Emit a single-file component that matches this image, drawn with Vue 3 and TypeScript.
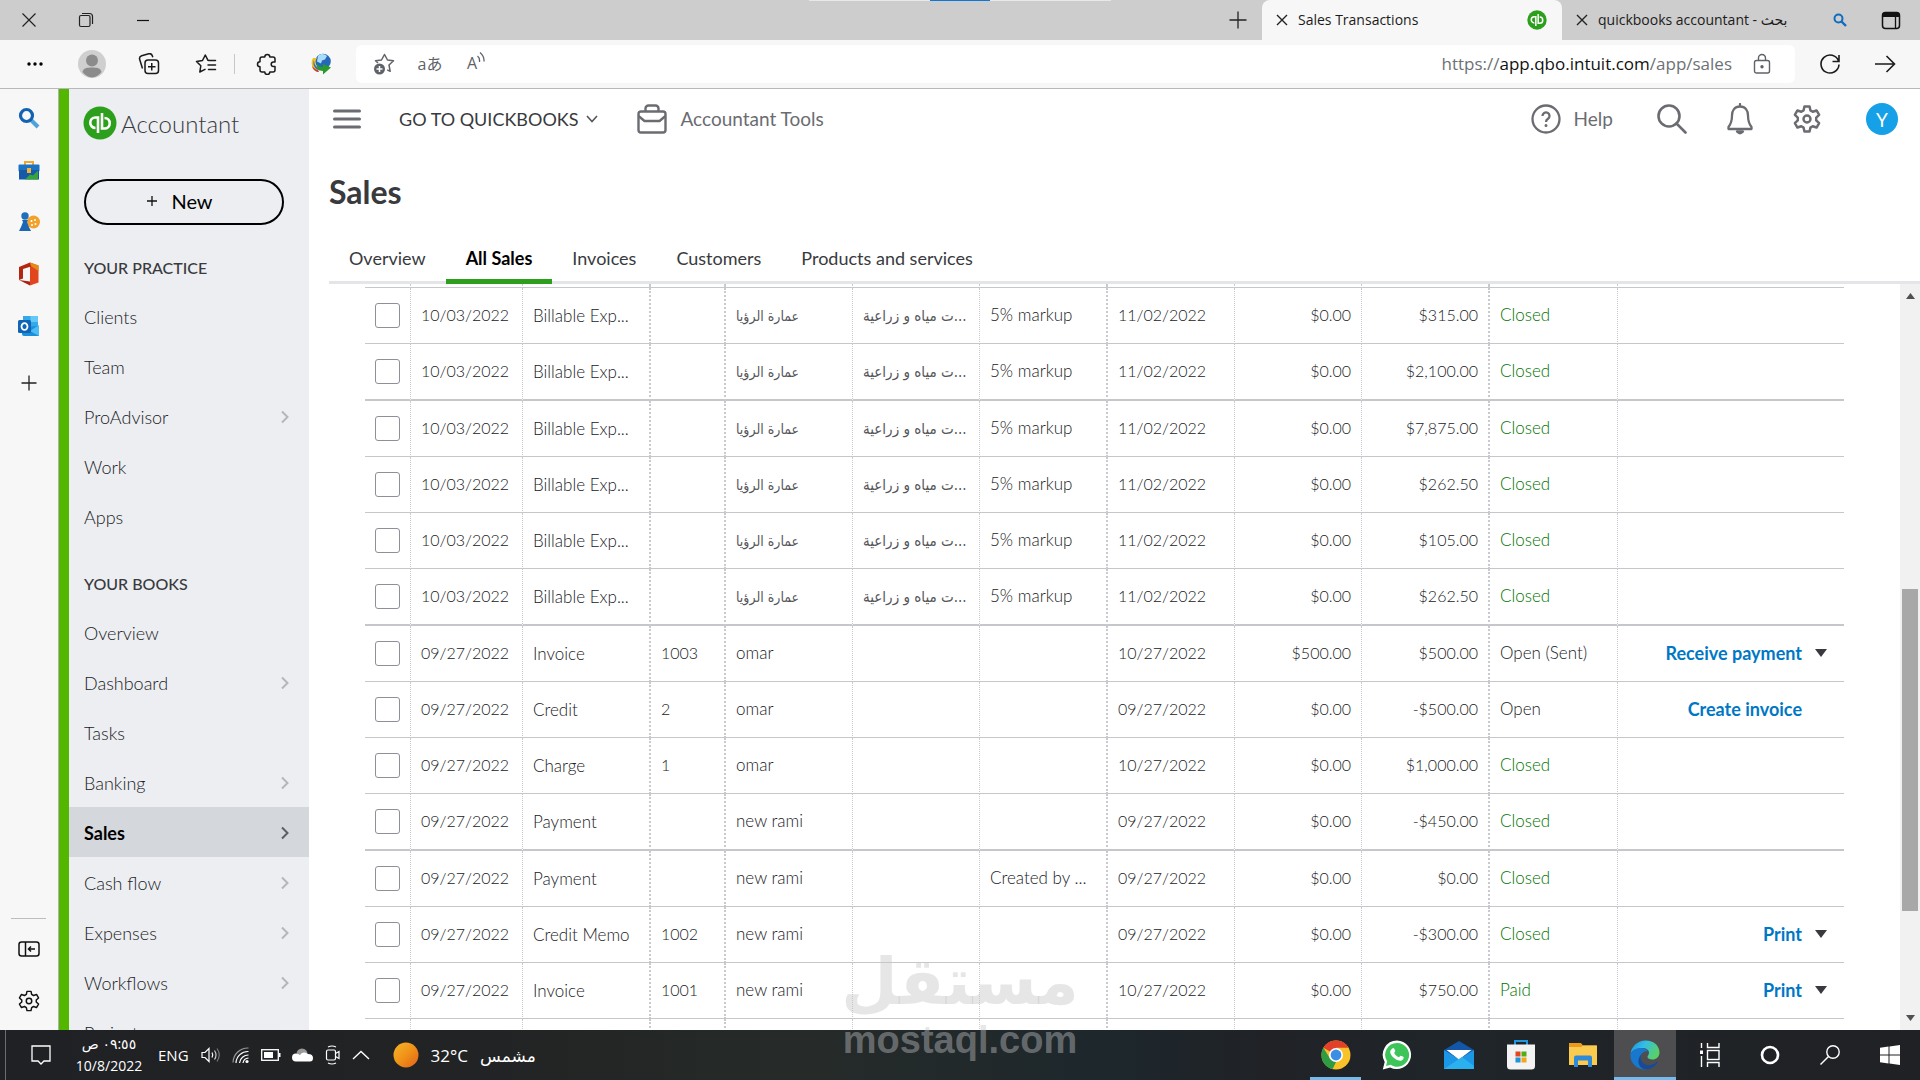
<script setup lang="ts">
interface NavItem {
  label: string
  expandable?: boolean
  active?: boolean
}

interface Sale {
  date: string
  type: string
  no?: string
  customer: string
  rtlCustomer?: boolean
  memo?: string
  note?: string
  due: string
  balance: string
  total: string
  status: string
  action?: string
  menu?: boolean
}

const practice: NavItem[] = [
  { label: 'Clients' },
  { label: 'Team' },
  { label: 'ProAdvisor', expandable: true },
  { label: 'Work' },
  { label: 'Apps' },
]

const books: NavItem[] = [
  { label: 'Overview' },
  { label: 'Dashboard', expandable: true },
  { label: 'Tasks' },
  { label: 'Banking', expandable: true },
  { label: 'Sales', expandable: true, active: true },
  { label: 'Cash flow', expandable: true },
  { label: 'Expenses', expandable: true },
  { label: 'Workflows', expandable: true },
  { label: 'Projects' },
]

const tabs = ['Overview', 'All Sales', 'Invoices', 'Customers', 'Products and services']

const billable = (total: string): Sale => ({
  date: '10/03/2022',
  type: 'Billable Exp...',
  customer: 'عمارة الرؤيا',
  rtlCustomer: true,
  memo: '...ت مياه و زراعية',
  note: '5% markup',
  due: '11/02/2022',
  balance: '$0.00',
  total,
  status: 'Closed',
})

const sales: Sale[] = [
  ...['$315.00', '$2,100.00', '$7,875.00', '$262.50', '$105.00', '$262.50'].map(billable),
  { date: '09/27/2022', type: 'Invoice', no: '1003', customer: 'omar', due: '10/27/2022', balance: '$500.00', total: '$500.00', status: 'Open (Sent)', action: 'Receive payment', menu: true },
  { date: '09/27/2022', type: 'Credit', no: '2', customer: 'omar', due: '09/27/2022', balance: '$0.00', total: '-$500.00', status: 'Open', action: 'Create invoice' },
  { date: '09/27/2022', type: 'Charge', no: '1', customer: 'omar', due: '10/27/2022', balance: '$0.00', total: '$1,000.00', status: 'Closed' },
  { date: '09/27/2022', type: 'Payment', customer: 'new rami', due: '09/27/2022', balance: '$0.00', total: '-$450.00', status: 'Closed' },
  { date: '09/27/2022', type: 'Payment', customer: 'new rami', note: 'Created by ...', due: '09/27/2022', balance: '$0.00', total: '$0.00', status: 'Closed' },
  { date: '09/27/2022', type: 'Credit Memo', no: '1002', customer: 'new rami', due: '09/27/2022', balance: '$0.00', total: '-$300.00', status: 'Closed', action: 'Print', menu: true },
  { date: '09/27/2022', type: 'Invoice', no: '1001', customer: 'new rami', due: '10/27/2022', balance: '$0.00', total: '$750.00', status: 'Paid', action: 'Print', menu: true },
]

const columns = ['check', 'date', 'type', 'no', 'customer', 'memo', 'note', 'due', 'balance', 'total', 'status', 'action']
const isSettled = (s: string): boolean => s === 'Closed' || s === 'Paid'
</script>

<template>
  <div class="screen">
    <header class="tabstrip">
      <div class="window-buttons">
        <button aria-label="Close window"><svg width="16" height="16" viewBox="0 0 16 16"><path d="M1.500 1.500l13 13M14.500 1.500l-13 13" stroke="#222" stroke-width="1.200" /></svg></button>
        <button aria-label="Restore window"><svg width="16" height="16" viewBox="0 0 16 16" fill="none" stroke="#222" stroke-width="1.200"><rect x="1.500" y="3.500" width="10.500" height="11" rx="1.500" /><path d="M4 1.500h7.500a3 3 0 0 1 3 3v7.500" /></svg></button>
        <button aria-label="Minimize window"><svg width="16" height="16" viewBox="0 0 16 16"><path d="M2 8.500h12" stroke="#111" stroke-width="1.200" /></svg></button>
      </div>
      <i class="drag-handle"></i>
      <button class="new-tab" aria-label="New tab"><svg width="18" height="18" viewBox="0 0 18 18"><path d="M9 0.500v17M0.500 9h17" stroke="#222" stroke-width="1.300" /></svg></button>
      <div class="browser-tab current">
        <button aria-label="Close tab"><svg width="12" height="12" viewBox="0 0 12 12"><path d="M1 1l10 10M11 1L1 11" stroke="#222" stroke-width="1.400" /></svg></button>
        <span class="title">Sales Transactions</span>
        <svg width="20" height="20" viewBox="0 0 34 34"><circle cx="17" cy="17" r="16.500" fill="#2ca01c" /><path d="M15 27V11.500h-2.500a5 5 0 0 0 0 10.500M19 7v15.500h2.500a5 5 0 0 0 0-10.500" fill="none" stroke="#fff" stroke-width="2.600" /></svg>
      </div>
      <div class="browser-tab">
        <button aria-label="Close tab"><svg width="12" height="12" viewBox="0 0 12 12"><path d="M1 1l10 10M11 1L1 11" stroke="#222" stroke-width="1.400" /></svg></button>
        <span class="title" dir="ltr">quickbooks accountant - <bdi>بحث</bdi></span>
        <svg width="14" height="14" viewBox="0 0 14 14" fill="none" stroke="#0f6cc0"><circle cx="5.500" cy="5.500" r="4" stroke-width="2" /><path d="M8.500 8.500l4.500 4.500" stroke-width="2.400" /></svg>
      </div>
      <button class="tab-menu" aria-label="Tab actions"><svg width="20" height="20" viewBox="0 0 20 20"><rect x="1.500" y="2.500" width="17" height="16" rx="3" fill="none" stroke="#111" stroke-width="1.500" /><path d="M1.500 7V5a3 3 0 0 1 3-3h11a3 3 0 0 1 3 3v2z" fill="#111" /><path d="M14.500 7v11" stroke="#111" stroke-width="1.300" /></svg></button>
    </header>

    <div class="toolbar">
      <div class="tools">
        <button aria-label="Settings and more"><svg width="18" height="6" viewBox="0 0 18 6"><circle cx="3" cy="3" r="1.700" /><circle cx="9" cy="3" r="1.700" /><circle cx="15" cy="3" r="1.700" /></svg></button>
        <button aria-label="Profile"><svg width="28" height="28" viewBox="0 0 28 28"><circle cx="14" cy="14" r="14" fill="#cfcfcf" /><circle cx="14" cy="10.500" r="6" fill="#8b8b8b" /><path d="M4.500 22c1-4 4.500-4.500 9.500-4.500s8.500.5 9.500 4.500A14 14 0 0 1 14 27.500 14 14 0 0 1 4.500 22z" fill="#8b8b8b" /></svg></button>
        <button aria-label="Collections"><svg width="22" height="22" viewBox="0 0 22 22" fill="none" stroke="#1b1b1b" stroke-width="1.500"><rect x="7" y="7" width="13.500" height="13.500" rx="3" /><path d="M13.750 10v7.500M10 13.750h7.500M4.500 15.500L1.700 6.500a3 3 0 0 1 2-3.700l7-2a3 3 0 0 1 3.600 2l.5 1.500" /></svg></button>
        <button aria-label="Favorites"><svg width="22" height="22" viewBox="0 0 22 22" fill="none" stroke="#1b1b1b" stroke-width="1.500" stroke-linejoin="round" stroke-linecap="round"><path d="M14 7.500l-1-.2L10.300 2 7.500 7.500l-6 1 4.300 4.300-1 6.200 5.200-2.700M14.500 7.500h6M13 12h7.500M13.500 16.500h7" /></svg></button>
        <span class="rule"></span>
        <button aria-label="Extensions"><svg width="22" height="22" viewBox="0 0 22 22" fill="none" stroke="#1b1b1b" stroke-width="1.500" stroke-linejoin="round"><path d="M6 4h2.800a2.500 2.500 0 0 1 5 0H17a2 2 0 0 1 2 2v3h-1.500a2.300 2.300 0 0 0 0 4.600H19V17a2 2 0 0 1-2 2h-3.200a2.500 2.500 0 0 1-5 0H6a2 2 0 0 1-2-2v-3.200a2.500 2.500 0 0 1 0-5V6a2 2 0 0 1 2-2z" /></svg></button>
        <button aria-label="Download manager"><svg width="20" height="22" viewBox="0 0 20 22"><circle cx="12" cy="8.500" r="7.800" fill="#2567b8" /><path d="M7 3c3-3 7-2 9 0l-2 3.500-3 1-1 3-4-2z" fill="#a9dcf7" /><path d="M2 5C-1 10 1 16 6 18l3-2C4 13 3 9 6 5z" fill="#f2c21b" /><path d="M3 7c0 5 3 8 7 9l-1 1.500C4 16.500 1 12 3 7z" fill="#3a6fd0" /><path d="M1 13c1 4 4 6 7 6l-1-2c-2 0-4-2-6-4z" fill="#c8402c" /><path d="M6 10c1 3 3 4 6 4v-3l8 3.500-8 7V18c-4 0-7-3-6-8z" fill="#2b9a2c" /></svg></button>
      </div>
      <div class="address">
        <button aria-label="Add to favorites"><svg width="24" height="24" viewBox="0 0 24 24" fill="none" stroke="#5f6368" stroke-width="1.500" stroke-linejoin="round"><path d="M6 11L3.500 8.800l6-.8L12.500 2.500l3 5.500 6 .8-4.500 4.200 1.200 6.300-3-1.500" /><circle cx="7.500" cy="17" r="5.500" fill="#5f6368" stroke="none" /><path d="M7.500 14v6M4.500 17h6" stroke="#fff" /></svg></button>
        <button class="glyph" aria-label="Translate">aあ</button>
        <button class="glyph aloud" aria-label="Read aloud">A<svg width="8" height="12" viewBox="0 0 8 12" fill="none" stroke="#5f6368" stroke-width="1.300"><path d="M0.500 4q2.500 2 2 6M3 0.500q4.500 4 4 9" /></svg></button>
        <span class="url"><span>https://</span>app.qbo.intuit.com<span>/app/sales</span></span>
        <svg width="18" height="22" viewBox="0 0 18 22" fill="none" stroke="#5f6368" stroke-width="1.400"><rect x="1.500" y="7.500" width="15" height="12.500" rx="2" /><path d="M5.500 7.500V5a3.500 3.500 0 0 1 7 0v2.500" /><circle cx="9" cy="13.700" r="1" fill="#5f6368" /></svg>
      </div>
      <button class="reload" aria-label="Reload"><svg width="22" height="22" viewBox="0 0 22 22" fill="none" stroke="#1b1b1b" stroke-width="1.600"><path d="M19.500 8A9 9 0 1 0 20 11.500M20 2v6.500h-6.500" /></svg></button>
      <button class="forward" aria-label="Back"><svg width="22" height="22" viewBox="0 0 22 22" fill="none" stroke="#1b1b1b" stroke-width="1.600"><path d="M1 11h19M12.500 3l8 8-8 8" /></svg></button>
    </div>

    <div class="workspace">
      <aside class="edgebar">
        <button aria-label="Search"><svg width="22" height="22" viewBox="0 0 22 22" fill="none"><path d="M13 13l7 7" stroke="#4ea3dd" stroke-width="4" /><circle cx="8.500" cy="8.500" r="6" stroke="#1262b4" stroke-width="3.200" /></svg></button>
        <button aria-label="Shopping"><svg width="22" height="22" viewBox="0 0 22 22"><path d="M7 6V3h8v3" fill="none" stroke="#f0a92a" stroke-width="2" /><rect x="0.500" y="5.500" width="21" height="7" rx="1" fill="#1b73c4" /><rect x="1" y="11" width="20" height="9.500" fill="#1559a8" /><path d="M7 20.500l5-5 3 1 5-5v9z" fill="#35a53a" /><rect x="9" y="9" width="4" height="5" fill="#f2b233" /></svg></button>
        <button aria-label="Games"><svg width="22" height="22" viewBox="0 0 22 22"><circle cx="15.500" cy="11" r="6.500" fill="#f2a22b" /><circle cx="13.500" cy="10" r="1" fill="#fff" /><circle cx="17" cy="9" r="1" fill="#fff" /><circle cx="17.500" cy="13" r="1" fill="#fff" /><circle cx="14" cy="14" r="1" fill="#fff" /><circle cx="7" cy="5" r="3.700" fill="#1f6fbd" /><path d="M4 9h6l-1 2 2 5 2 4H1l2-4 2-5z" fill="#1c66b3" /></svg></button>
        <button aria-label="Office"><svg width="22" height="24" viewBox="0 0 22 24"><path d="M12 0.500l8.500 3v17l-8.500 3z" fill="#e2461f" /><path d="M12 .5L1 5v13l4-1.500V7l8-2.500z" fill="#b3260f" /><path d="M12 .5l8.500 3V9L13 4z" fill="#e58a18" /><path d="M1 18l11 1.500v4z" fill="#a82410" /></svg></button>
        <button aria-label="Outlook"><svg width="22" height="22" viewBox="0 0 22 22"><rect x="5" y="1" width="15" height="13" fill="#35a8e8" /><rect x="12.500" y="1" width="7.500" height="6" fill="#64c8f8" /><path d="M4 12l17-1v10H6a2 2 0 0 1-2-2z" fill="#1a8fdc" /><path d="M21 10v11l-9-5z" fill="#4bbdf2" /><rect x="0" y="5" width="13" height="13" rx="1.500" fill="#0f64b5" /><ellipse cx="6.500" cy="11.500" rx="3" ry="3.400" fill="none" stroke="#fff" stroke-width="1.800" /></svg></button>
        <button class="add" aria-label="Add"><svg width="16" height="16" viewBox="0 0 16 16"><path d="M8 0.500v15M0.500 8h15" stroke="#222" stroke-width="1.300" /></svg></button>
        <span class="push"></span>
        <button aria-label="Hide sidebar"><svg width="22" height="16" viewBox="0 0 22 16" fill="none" stroke="#111" stroke-width="1.500"><rect x="1" y="1" width="20" height="14" rx="2.500" /><path d="M7.500 1v14M17 8h-6.500M13 5.500L10.500 8l2.500 2.500" /></svg></button>
        <button aria-label="Sidebar settings"><svg width="22" height="22" viewBox="0 0 24 24" fill="none" stroke="#111" stroke-width="1.600" stroke-linejoin="round"><circle cx="12" cy="12" r="3" /><path d="M9.800 1.500h4.400l.7 3.300 2 1.200 3.300-1.100 2.200 3.800-2.500 2.300v2l2.500 2.300-2.200 3.800-3.300-1.100-2 1.200-.7 3.300H9.800l-.7-3.300-2-1.200-3.300 1.100-2.200-3.800L4.100 13v-2L1.600 8.700l2.200-3.800L7.100 6l2-1.200z" /></svg></button>
      </aside>

      <nav class="side">
        <a class="brand" href="#">
          <svg width="34" height="34" viewBox="0 0 34 34"><circle cx="17" cy="17" r="16.500" fill="#2ca01c" /><path d="M15 27V11.500h-2.500a5 5 0 0 0 0 10.500M19 7v15.500h2.500a5 5 0 0 0 0-10.500" fill="none" stroke="#fff" stroke-width="2.600" /></svg>
          Accountant
        </a>
        <button class="new"><svg width="10" height="10" viewBox="0 0 10 10"><path d="M5 0v10M0 5h10" stroke="#111" stroke-width="1.300" /></svg>New</button>
        <h2>YOUR PRACTICE</h2>
        <a v-for="item in practice" :key="item.label" class="item" href="#">
          {{ item.label }}
          <svg v-if="item.expandable" width="8" height="14" viewBox="0 0 8 14" fill="none" stroke="#b4b6bb" stroke-width="2"><path d="M1 1.500L6.500 7 1 12.500" /></svg>
        </a>
        <h2 class="second">YOUR BOOKS</h2>
        <a v-for="item in books" :key="item.label" class="item" :class="{ active: item.active }" href="#">
          {{ item.label }}
          <svg v-if="item.expandable" width="8" height="14" viewBox="0 0 8 14" fill="none" :stroke="item.active ? '#5c5e63' : '#b4b6bb'" stroke-width="2"><path d="M1 1.500L6.500 7 1 12.500" /></svg>
        </a>
      </nav>

      <main class="page">
        <div class="topbar">
          <button aria-label="Toggle menu"><svg width="28" height="20" viewBox="0 0 28 20"><path d="M1.500 2h25M1.500 10h25M1.500 18h25" stroke="#6b6c72" stroke-width="3" stroke-linecap="round" /></svg></button>
          <button class="goto">GO TO QUICKBOOKS<svg width="12" height="8" viewBox="0 0 12 8" fill="none" stroke="#55565b" stroke-width="1.600"><path d="M1 1l5 5.500L11 1" /></svg></button>
          <button class="tools-link"><svg width="30" height="30" viewBox="0 0 30 30" fill="none" stroke="#6b6c72" stroke-width="2.400" stroke-linejoin="round"><rect x="1.500" y="7.500" width="27" height="21" rx="2.500" /><path d="M8.500 7V4.500a3 3 0 0 1 3-3h7a3 3 0 0 1 3 3V7M1.500 12l6 5h15l6-5" /></svg><span>Accountant Tools</span></button>
          <div class="right">
            <button class="help"><svg width="30" height="30" viewBox="0 0 30 30" fill="none" stroke="#6b6c72" stroke-width="2.300"><circle cx="15" cy="15" r="13.500" /><path d="M11.500 12a3.500 3.500 0 1 1 5.500 2.800c-1.500 1-2 1.500-2 3.200" /><circle cx="15" cy="21.500" r="0.900" fill="#6b6c72" stroke-width="1.200" /></svg><span>Help</span></button>
            <button aria-label="Search"><svg width="30" height="30" viewBox="0 0 30 30" fill="none" stroke="#6b6c72" stroke-width="2.600" stroke-linecap="round"><circle cx="12" cy="12" r="10.500" /><path d="M19.500 19.500l9 9" /></svg></button>
            <button aria-label="Notifications"><svg width="26" height="32" viewBox="0 0 26 32" fill="none" stroke="#6b6c72" stroke-width="2.300" stroke-linejoin="round" stroke-linecap="round"><path d="M13 1v2.500M13 3.500c-5.500 0-8 4-8 9 0 7-1.500 9-3.500 11.500v2h23v-2C22.500 21.500 21 19.500 21 12.500c0-5-2.500-9-8-9z" /><path d="M10 28.500q3 3.500 6 0z" fill="#6b6c72" /></svg></button>
            <button aria-label="Settings"><svg width="28" height="28" viewBox="0 0 24 24" fill="none" stroke="#6b6c72" stroke-width="2.100" stroke-linejoin="round"><circle cx="12" cy="12" r="3" /><path d="M9.800 1.300h4.400l.7 3.300 2 1.200 3.300-1.100 2.200 3.800-2.500 2.300v2.400l2.500 2.300-2.200 3.800-3.300-1.100-2 1.200-.7 3.300H9.800l-.7-3.300-2-1.200-3.300 1.100-2.200-3.800 2.500-2.300v-2.400L1.600 8.500l2.200-3.800 3.300 1.100 2-1.200z" /></svg></button>
            <button class="avatar">Y</button>
          </div>
        </div>

        <h1>Sales</h1>
        <div class="tabs">
          <a v-for="tab in tabs" :key="tab" href="#" :class="{ current: tab === 'All Sales' }">{{ tab }}</a>
        </div>

        <div class="scroller">
          <div class="grid-area">
            <table>
              <colgroup><col v-for="c in columns" :key="c" :class="'w-' + c" /></colgroup>
              <tbody>
                <tr class="sliver"><td v-for="c in columns" :key="c"></td></tr>
                <tr v-for="(s, i) in sales" :key="i" :class="{ thick: i % 4 === 1 }">
                  <td class="check"><input type="checkbox" :aria-label="'Select ' + s.type + ' ' + s.total" /></td>
                  <td class="figure">{{ s.date }}</td>
                  <td class="type">{{ s.type }}</td>
                  <td class="figure">{{ s.no }}</td>
                  <td><bdi :class="{ ar: s.rtlCustomer }">{{ s.customer }}</bdi></td>
                  <td><bdi v-if="s.memo" class="ar memo" dir="rtl">{{ s.memo }}</bdi></td>
                  <td>{{ s.note }}</td>
                  <td class="figure">{{ s.due }}</td>
                  <td class="figure num">{{ s.balance }}</td>
                  <td class="figure num">{{ s.total }}</td>
                  <td :class="{ settled: isSettled(s.status) }">{{ s.status }}</td>
                  <td>
                    <div v-if="s.action" class="action">
                      <a href="#">{{ s.action }}</a>
                      <button :class="{ blank: !s.menu }" aria-label="More actions"><svg width="12" height="8" viewBox="0 0 12 8"><path d="M0 0h12L6 8z" fill="#393a3d" /></svg></button>
                    </div>
                  </td>
                </tr>
                <tr><td v-for="c in columns" :key="c"></td></tr>
              </tbody>
            </table>
          </div>
          <div class="scrollbar">
            <svg width="9" height="6" viewBox="0 0 9 6"><path d="M0 6h9L4.500 0z" fill="#505050" /></svg>
            <span class="before"></span><span class="thumb"></span><span class="after"></span>
            <svg width="9" height="6" viewBox="0 0 9 6"><path d="M0 0h9L4.500 6z" fill="#505050" /></svg>
          </div>
        </div>
      </main>
    </div>

    <footer class="taskbar">
      <span class="peek"></span>
      <button class="notes" aria-label="Notifications"><svg width="20" height="20" viewBox="0 0 20 20" fill="none" stroke="#fff" stroke-width="1.300"><path d="M1 1h18v15h-6l-3 3-3-3H1z" /></svg></button>
      <div class="clock"><span dir="rtl">٠٩:٥٥ ص</span><span>10/8/2022</span></div>
      <span class="lang">ENG</span>
      <div class="tray">
        <svg width="20" height="18" viewBox="0 0 20 18" fill="none" stroke="#fff" stroke-width="1.200"><path d="M1 6.500h3l4-4v13l-4-4H1zM11 6.500q1.500 2.500 0 5" /><path d="M13.500 4.500q3 4.500 0 9" stroke="#ccc" /><path d="M16 2.500q4.500 6.500 0 13" stroke="#777" /></svg>
        <svg width="18" height="18" viewBox="0 0 18 18" fill="none" stroke="#fff" stroke-width="1.200"><path d="M1 16.500A15 15 0 0 1 16.500 2" stroke="#999" /><path d="M4 17A12 12 0 0 1 16.500 5.500M7.500 17a9 9 0 0 1 9-8M11 17a6 6 0 0 1 5.500-5" /><circle cx="15" cy="15.500" r="1.600" fill="#fff" stroke="none" /></svg>
        <svg width="20" height="12" viewBox="0 0 20 12"><rect x="0.700" y="0.700" width="16.600" height="10.600" fill="none" stroke="#fff" stroke-width="1.300" /><rect x="3" y="3" width="9" height="6" fill="#fff" /><rect x="18" y="4" width="1.500" height="4" fill="#fff" /></svg>
        <svg width="22" height="14" viewBox="0 0 22 14"><circle cx="10" cy="6" r="5.500" fill="#9a9a9a" /><path d="M4 13.500a4 4 0 0 1 0-8q2 0 4 1.500a5 5 0 0 1 8-1q5 0 5 4 0 3.500-3 3.500z" fill="#fff" /></svg>
        <svg width="16" height="20" viewBox="0 0 16 20" fill="none" stroke="#fff" stroke-width="1.200"><rect x="1.500" y="5" width="9" height="10" rx="1.500" /><path d="M10.500 8.500l3.500-2v7l-3.500-2M3 2q4-2 8 0M3 18q4 2 8 0" /></svg>
        <svg width="18" height="10" viewBox="0 0 18 10" fill="none" stroke="#fff" stroke-width="1.400"><path d="M1 9l8-7.500L17 9" /></svg>
      </div>
      <div class="weather">
        <svg width="26" height="26" viewBox="0 0 26 26"><defs><linearGradient id="sun" x1="0" y1="0" x2="1" y2="1"><stop offset="0" stop-color="#f6b52a" /><stop offset=".5" stop-color="#f09218" /><stop offset="1" stop-color="#e2601c" /></linearGradient></defs><circle cx="13" cy="13" r="12.500" fill="url(#sun)" /></svg>
        <span>32°C</span><bdi>مشمس</bdi>
      </div>
      <div class="apps">
        <button class="open" aria-label="Chrome"><svg width="30" height="30" viewBox="0 0 30 30"><circle cx="15" cy="15" r="14.500" fill="#f9c229" /><path d="M15 15L2.400 7.800A14.500 14.500 0 0 1 27.600 7.800H15z" fill="#e2402a" /><path d="M2.400 7.800L9 18.500l6 3.500-3.500 7.200A14.500 14.500 0 0 1 2.400 7.800z" fill="#2f9b42" /><circle cx="15" cy="15" r="7" fill="#fff" /><circle cx="15" cy="15" r="5.400" fill="#3b8ee6" /></svg></button>
        <button aria-label="WhatsApp"><svg width="30" height="30" viewBox="0 0 30 30"><path d="M15 .5A14.300 14.300 0 0 0 2.700 22L.8 29.400l7.400-1.900A14.300 14.300 0 1 0 15 .5z" fill="#fff" /><path d="M15 3A11.900 11.900 0 0 0 5.200 21.500L4 26l4.600-1.200A11.900 11.900 0 1 0 15 3z" fill="#3dc55a" /><path d="M10.500 8.500c1-1 1.800 0 2.700 2.300.3.900-1 1.800-1 2.200 1 2 2.500 3.500 4.600 4.300.6 0 1.300-1.700 2-1.500 2.300.9 3 1.300 2.900 2-.6 3-3.300 3.300-5.700 2.400-4-1.300-7.800-5.500-7.800-8.300 0-1.400 1-2.600 2.300-3.400z" fill="#fff" /></svg></button>
        <button aria-label="Mail"><svg width="30" height="28" viewBox="0 0 30 28"><path d="M0 9L15 0l15 9v5H0z" fill="#1356a8" /><path d="M0 9v19h30V9L15 18z" fill="#1c97e6" /><path d="M2.500 9h25L15 18.500z" fill="#fff" /><path d="M0 28l18-12 12 9v3z" fill="#2bb0f0" /></svg></button>
        <button aria-label="Store"><svg width="28" height="30" viewBox="0 0 28 30"><path d="M8 5V1h12v4" fill="none" stroke="#2297e0" stroke-width="2" /><path d="M0 4.500h28V26a3.500 3.500 0 0 1-3.500 3.500h-21A3.500 3.500 0 0 1 0 26z" fill="#f3f3f3" /><path d="M8.500 11.500h5v5h-5z" fill="#e5461f" /><path d="M14.500 11.500h5v5h-5z" fill="#52ad12" /><path d="M8.500 17.500h5v5h-5z" fill="#1b93dd" /><path d="M14.500 17.500h5v5h-5z" fill="#f3a61c" /></svg></button>
        <button aria-label="File Explorer"><svg width="28" height="24" viewBox="0 0 28 24"><path d="M0 0h12l2 2.500h13.500V8H0z" fill="#ec9a1c" /><path d="M0 4h12l2-1.500h14V22H0z" fill="#fbcb4f" /><path d="M5 24v-9.500a2 2 0 0 1 2-2h14a2 2 0 0 1 2 2V24h-4v-6.500H9V24z" fill="#2f8ad8" /></svg></button>
        <button class="open focused" aria-label="Edge"><svg width="30" height="30" viewBox="0 0 30 30"><defs><linearGradient id="edgeTop" x1="0" y1="0" x2="1" y2=".4"><stop offset="0" stop-color="#1d8fe0" /><stop offset=".5" stop-color="#34bfe6" /><stop offset="1" stop-color="#57d06a" /></linearGradient></defs><path d="M.5 14C1.500 6 8 .5 15.500 .5 24 .5 29.500 6 29.500 12.500c0 4.500-3.500 7-7 7-3 0-5-1-5-2.500s1.500-2 1.500-4.500c0-2.500-3-4.500-6.500-4.500C7 8 2 10.500.5 14z" fill="url(#edgeTop)" /><path d="M.5 14C2 10 6.500 8 11.500 8c3 0 5.500 1.500 6.500 3.500-3-1-7.500 1-7.500 6.500 0 6 5 9.500 9 10-2 1.300-4 1.500-5 1.500C7 29.500-.5 23 .5 14z" fill="#1878cf" /><path d="M11.500 14c-3 7 3 12 8.500 11 3.500-.5 5.500-2 7-3.500.6 0 .8.500.5 1-2.500 4-6.500 7-12.500 7-6-1-9.500-9-3.500-15.500z" fill="#164b98" /></svg></button>
        <button class="sys first" aria-label="Task view"><svg width="20" height="24" viewBox="0 0 20 24" fill="none" stroke="#fff" stroke-width="1.400"><path d="M1.500 0v5M1.500 13v11M7.500 0v4.500h11.500V0M7.500 24v-4.500h11.500V24" /><rect x="7.500" y="7.500" width="11.500" height="9" /><path d="M0 7.500h3v3.500H0z" fill="#fff" stroke="none" /></svg></button>
        <button class="sys" aria-label="Cortana"><svg width="20" height="20" viewBox="0 0 20 20"><circle cx="10" cy="10" r="8" fill="none" stroke="#fff" stroke-width="2.600" /></svg></button>
        <button class="sys" aria-label="Search"><svg width="20" height="20" viewBox="0 0 20 20" fill="none" stroke="#fff" stroke-width="1.400"><circle cx="13" cy="7" r="6.200" /><path d="M8.500 11.500L0.500 19.500" /></svg></button>
        <button class="sys" aria-label="Start"><svg width="20" height="20" viewBox="0 0 20 20" fill="#fff"><path d="M0 2.800l8.500-1.200v7.900H0zM9.500 1.500L20 0v9.500H9.500zM0 10.500h8.500v7.900L0 17.200zM9.500 10.500H20V20L9.500 18.500z" /></svg></button>
      </div>
    </footer>

    <div class="watermark"><bdi>مستقل</bdi><span>mostaql.com</span></div>
  </div>
</template>

<style>
body {
  margin: 0;
}
</style>

<style scoped>
* {
  box-sizing: border-box;
}
button {
  display: flex;
  align-items: center;
  justify-content: center;
  padding: 0;
  border: 0;
  background: none;
  color: inherit;
  font: inherit;
}
a {
  color: inherit;
  text-decoration: none;
}
svg {
  flex: none;
}
.screen {
  position: relative;
  display: flex;
  flex-direction: column;
  height: 100vh;
  overflow: hidden;
  background: #fff;
  color: #393a3d;
  font-family: Lato, "DejaVu Sans", sans-serif;
  font-size: 16px;
}

/* Browser chrome */
.tabstrip {
  display: flex;
  align-items: stretch;
  height: 40px;
  background: #cdcdcd;
  color: #1b1b1b;
  font: 14px "Open Sans", "DejaVu Sans", sans-serif;
}
.window-buttons {
  display: flex;
  flex: 1;
}
.window-buttons button {
  width: 57px;
}
.drag-handle {
  position: absolute;
  top: 0;
  left: 50%;
  width: 302px;
  height: 1px;
  margin-left: -151px;
  background: linear-gradient(90deg, #e8e8e8 40%, #0f78d4 40%, #0f78d4 60%, #e8e8e8 60%);
}
.new-tab {
  width: 48px;
}
.browser-tab {
  display: flex;
  align-items: center;
  gap: 10px;
  width: 300px;
  padding: 0 15px 0 14px;
}
.browser-tab .title {
  flex: 1;
  padding-bottom: 2px;
  white-space: nowrap;
}
.browser-tab.current {
  border-radius: 8px 8px 0 0;
  background: #f7f7f7;
}
.tab-menu {
  width: 58px;
}
.toolbar {
  display: flex;
  align-items: center;
  height: 49px;
  border-bottom: 1px solid #b8b8b8;
  background: #f7f7f7;
}
.tools {
  display: flex;
  align-items: center;
  width: 356px;
  padding-left: 6px;
}
.tools button {
  width: 57px;
}
.tools .rule {
  width: 1px;
  height: 20px;
  margin-right: 5px;
  background: #c8c8c8;
}
.tools .rule ~ button {
  width: 54px;
}
.address {
  display: flex;
  flex: 1;
  align-items: center;
  height: 38px;
  padding: 0 24px 0 16px;
  border-radius: 6px;
  background: #fff;
  color: #5f6368;
}
.glyph {
  width: 46px;
  margin-left: 11px;
  padding-bottom: 3px;
  font: 16px "Open Sans", "Noto Sans CJK JP", sans-serif;
}
.glyph.aloud {
  width: 24px;
  align-items: flex-start;
}
.url {
  flex: 1;
  margin-right: 21px;
  padding-bottom: 2px;
  color: #111;
  font: 17px "Open Sans", sans-serif;
  text-align: right;
}
.url span {
  color: #6d7175;
}
.reload {
  width: 70px;
}
.forward {
  width: 40px;
  margin-right: 15px;
}

/* Side rails */
.workspace {
  display: flex;
  flex: 1;
  min-height: 0;
}
.edgebar {
  display: flex;
  flex-direction: column;
  align-items: center;
  width: 59px;
  padding: 3px 1px 3px 0;
  border-right: 1px solid #b0b0b0;
  background: #f7f7f7;
}
.edgebar button {
  width: 100%;
  height: 52px;
}
.edgebar .add {
  height: 62px;
}
.edgebar .push {
  flex: 1;
  width: 35px;
  margin-bottom: 4px;
  border-bottom: 1px solid #bdbdbd;
}
.side {
  width: 250px;
  overflow: hidden;
  border-left: 10px solid #53b700;
  background: #eceef1;
}
.brand {
  display: flex;
  align-items: center;
  gap: 4px;
  height: 68px;
  padding-left: 14px;
  font-size: 24px;
  font-weight: 300;
}
.new {
  gap: 14px;
  width: 200px;
  height: 46px;
  padding: 0 8px 3px 0;
  margin: 22px 15px 16px;
  border: 2px solid #000;
  border-radius: 23px;
  color: #000;
  font-size: 20px;
}
.side h2 {
  margin: 0;
  padding: 4px 0 0 15px;
  font-size: 16px;
  font-weight: 500;
  line-height: 46px;
}
.side .second {
  padding-top: 20px;
}
.item {
  display: flex;
  align-items: center;
  justify-content: space-between;
  height: 50px;
  padding: 2px 20px 0 15px;
  color: #202124;
  font-size: 18px;
  font-weight: 300;
}
.item.active {
  background: #d4d7dc;
  color: #000;
  font-weight: 700;
}

/* Page */
.page {
  display: flex;
  flex: 1;
  flex-direction: column;
  min-width: 0;
}
.topbar {
  display: flex;
  align-items: center;
  height: 60px;
  padding: 0 22px 0 24px;
  color: #6b6c72;
  font-size: 19px;
}
.goto {
  gap: 8px;
  margin-left: 38px;
  color: #393a3d;
  font-size: 18px;
}
.tools-link {
  gap: 13px;
  margin-left: 39px;
}
.topbar span {
  padding-bottom: 2px;
}
.right {
  display: flex;
  align-items: center;
  gap: 40px;
  margin-left: auto;
}
.help {
  gap: 13px;
  margin-right: 4px;
}
.avatar {
  width: 32px;
  height: 32px;
  margin-left: 5px;
  border-radius: 50%;
  background: #16a0e8;
  color: #fff;
}
h1 {
  margin: 23px 20px 0;
  font-size: 32px;
  font-weight: 700;
  line-height: 40px;
}
.tabs {
  display: flex;
  height: 72px;
  padding-top: 23px;
  margin: 0 0 0 20px;
  border-bottom: 3px solid #e3e5e8;
}
.tabs a {
  height: 49px;
  padding: 0 20px;
  font-size: 18px;
  line-height: 47px;
}
.tabs .current {
  border-bottom: 5px solid #2ca01c;
  border-radius: 3px 3px 0 0;
  color: #000;
  font-weight: 700;
}
.scroller {
  display: flex;
  flex: 1;
  min-height: 0;
}
.grid-area {
  flex: 1;
  overflow: hidden;
  padding: 0 56px;
}
table {
  width: 100%;
  table-layout: fixed;
  border-spacing: 0;
}
.w-check { width: 46px; }
.w-date { width: 112px; }
.w-type { width: 128px; }
.w-no { width: 75px; }
.w-customer,
.w-memo,
.w-due,
.w-balance { width: 127px; }
.w-note,
.w-total,
.w-status { width: 128px; }
td {
  height: 56px;
  padding: 0 10px 3px;
  border-right: 1px dotted #c9cacf;
  border-bottom: 1px solid #c6c7ca;
  color: #202124;
  font-size: 17px;
  font-weight: 300;
  white-space: nowrap;
}
td.figure {
  font-size: 16px;
}
td:nth-child(3),
td:nth-child(4),
td:nth-child(7),
td:nth-child(10) {
  border-right-width: 2px;
}
td:last-child {
  padding-bottom: 1px;
  border-right: 0;
}
.sliver td {
  height: 4px;
  padding-bottom: 0;
}
.thick td {
  height: 57px;
  border-bottom-width: 2px;
}
td.check {
  padding-bottom: 0;
}
td.check input {
  display: block;
  width: 25px;
  height: 25px;
  margin: 0;
  appearance: none;
  border: 1px solid #8d9096;
  border-radius: 3px;
  background: #fff;
}
td.type {
  padding-bottom: 1px;
}
.ar {
  color: #55565b;
  font-family: "DejaVu Sans Condensed", "DejaVu Sans", sans-serif;
  font-size: 14px;
}
.ar.memo {
  font-size: 15px;
}
.num {
  text-align: right;
}
td.settled {
  color: #007400;
}
.action {
  display: flex;
  align-items: center;
  justify-content: flex-end;
  gap: 13px;
  padding-right: 7px;
  color: #0077c5;
  font-size: 18px;
  font-weight: 700;
}
.action .blank {
  visibility: hidden;
}
.scrollbar {
  display: flex;
  flex-direction: column;
  align-items: center;
  width: 20px;
  padding: 9px 0;
  background: #f1f1f1;
}
.scrollbar span {
  width: 16px;
}
.before {
  flex: 290;
}
.thumb {
  flex: 322;
  background: #a8a8a8;
}
.after {
  flex: 104;
}

/* Taskbar */
.taskbar {
  display: flex;
  align-items: center;
  height: 50px;
  background: linear-gradient(90deg, #202124, #222324 25%, #262b29 42%, #1d272c 58%, #202226 66%, #1f2529 75%, #202124);
  color: #fff;
  font: 16px "Open Sans", "DejaVu Sans", sans-serif;
}
.peek {
  width: 6px;
  height: 100%;
  border-right: 1px solid #6d6d6d;
}
.notes {
  width: 70px;
}
.clock {
  display: flex;
  flex-direction: column;
  align-items: center;
  width: 66px;
  font-size: 14px;
  line-height: 22px;
}
.lang {
  margin-left: 16px;
  font-size: 15px;
}
.tray {
  display: flex;
  align-items: center;
  gap: 11px;
  margin-left: 12px;
}
.weather {
  display: flex;
  align-items: center;
  gap: 12px;
  margin-left: 23px;
  font-size: 17px;
}
.apps {
  display: flex;
  height: 100%;
  margin-left: auto;
}
.apps button {
  width: 62px;
  border-bottom: 3px solid transparent;
  border-top: 3px solid transparent;
}
.apps .open {
  width: 51px;
  margin: 0 5px 0 6px;
  border-bottom-color: #76b9ed;
}
.apps .focused {
  width: 62px;
  margin: 0;
  border-top-color: #4e4e50;
  background: #4e4e50;
}
.apps .sys {
  width: 60px;
}
.apps .first {
  margin-left: 4px;
}

.watermark {
  position: absolute;
  left: 50%;
  bottom: 20px;
  display: flex;
  flex-direction: column;
  align-items: center;
  width: 232px;
  margin-left: -116px;
  color: rgba(197, 197, 200, 0.43);
  font: bold 38px/40px "Liberation Sans", sans-serif;
}
.watermark bdi {
  font: bold 65px/76px "DejaVu Sans", sans-serif;
}
</style>
